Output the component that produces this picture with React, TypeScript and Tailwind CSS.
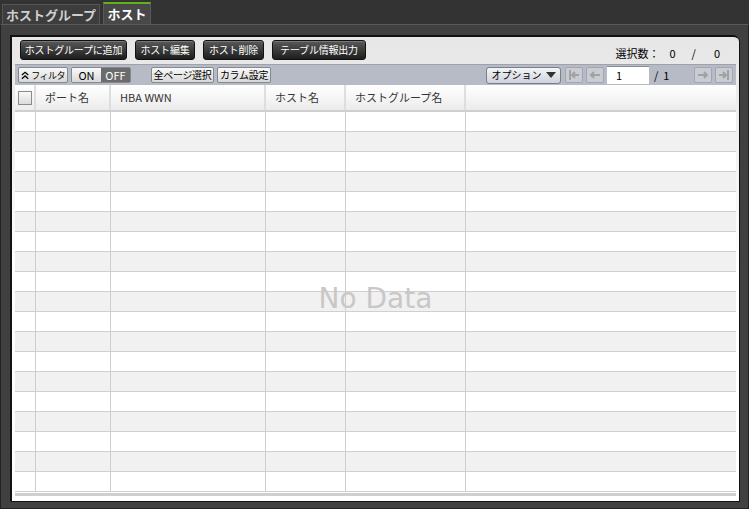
import React from 'react';

const font = { fontFamily: '"Noto Sans CJK JP", "Liberation Sans", sans-serif' };

const DarkButton = ({ label, width }: { label: string; width: string }) => (
  <button
    className={`${width} h-[20px] rounded-[3px] border border-[#111] bg-gradient-to-b from-[#5a5a5a] to-[#1e1e1e] text-[10px] tracking-[-0.2px] whitespace-nowrap leading-none text-white shadow-[inset_0_1px_0_#777] flex items-center justify-center`}
  >
    {label}
  </button>
);

const ToolButton = ({ children, className = '' }: { children: React.ReactNode; className?: string }) => (
  <button
    className={`h-[16px] px-[2px] rounded-[2px] border border-[#85888f] bg-gradient-to-b from-[#fafafa] to-[#d8d8d8] text-[10px] tracking-[-0.3px] whitespace-nowrap leading-none text-black flex items-center justify-center ${className}`}
  >
    {children}
  </button>
);

const PageButton = ({ kind }: { kind: 'first' | 'prev' | 'next' | 'last' }) => (
  <div className="w-[18px] h-[16px] rounded-[2px] border border-[#a3a6ae] bg-[#c9ccd3] flex items-center justify-center">
    <svg width="12" height="10" viewBox="0 0 12 10" fill="none" stroke="#a2a2a2" strokeWidth="2">
      {kind === 'first' && (
        <>
          <path d="M2 0v10" />
          <path d="M11 5H4M7 2L4 5l3 3" />
        </>
      )}
      {kind === 'prev' && <path d="M11 5H2M5 2L2 5l3 3" />}
      {kind === 'next' && <path d="M1 5h9M7 2l3 3-3 3" />}
      {kind === 'last' && (
        <>
          <path d="M10 0v10" />
          <path d="M1 5h7M5 2l3 3-3 3" />
        </>
      )}
    </svg>
  </div>
);

const cols = 'grid grid-cols-[21px_75px_155px_80px_120px_1fr]';

export default function App() {
  const rows = Array.from({ length: 19 }, (_, i) => i);
  const headers = ['', 'ポート名', 'HBA WWN', 'ホスト名', 'ホストグループ名', ''];

  return (
    <div className="w-[749px] h-[509px] bg-[#333333] flex flex-col overflow-hidden" style={font}>
      {/* tabs */}
      <div className="h-[24px] flex items-end pl-[2px] gap-[3px] shrink-0">
        <div className="h-[20px] w-[98px] bg-[#3d3d3d] border border-b-0 border-[#555] flex items-center justify-center text-[13px] font-bold text-[#cfcfcf]">
          ホストグループ
        </div>
        <div className="h-[22px] w-[48px] bg-[#484848] border-t-2 border-t-[#5fb21b] border-x border-x-[#5a5a5a] flex items-center justify-center text-[13px] font-bold text-white">
          ホスト
        </div>
      </div>

      {/* panel */}
      <div className="flex-1 border-t border-[#5a5a5a] border-x border-b border-x-[#222] border-b-[#222] bg-[#404040] pt-[10px] pl-[9px] pr-[9px] pb-[7px] flex">
        <div className="flex-1 flex flex-col rounded-tr-[6px] border-l-2 border-t-2 border-[#111] bg-gradient-to-b from-[#e6e6e6] via-white to-white pb-[5px] px-[3px] shadow-[1px_1px_0_#111]">
          {/* button row */}
          <div className="h-[24px] flex items-center pl-[5px] pr-[16px] pt-[2px]">
            <div className="flex gap-[8px]">
              <DarkButton label="ホストグループに追加" width="w-[107px]" />
              <DarkButton label="ホスト編集" width="w-[60px]" />
              <DarkButton label="ホスト削除" width="w-[61px]" />
              <DarkButton label="テーブル情報出力" width="w-[94px]" />
            </div>
            <div className="ml-auto flex items-center text-[11px] text-black pt-[6px]">
              <span>選択数：</span>
              <span className="ml-[10px]">0</span>
              <span className="ml-[16px]">/</span>
              <span className="ml-[18px]">0</span>
            </div>
          </div>

          {/* toolbar */}
          <div className="mt-[3px] h-[21px] bg-[#b7bbc6] border-t border-[#9ea2ac] flex items-center pl-[3px] pr-[3px]">
            <ToolButton className="w-[50px] gap-[2px]">
              <svg width="9" height="9" viewBox="0 0 9 9" fill="none" stroke="#000" strokeWidth="1.4">
                <path d="M1 4l3.5-3L8 4M1 8l3.5-3L8 8" />
              </svg>
              <span className="text-[9px] tracking-[-0.5px]">フィルタ</span>
            </ToolButton>
            <div className="ml-[3px] h-[16px] w-[60px] flex rounded-[2px] border border-[#85888f] overflow-hidden text-[11px] leading-none">
              <div className="w-[30px] bg-gradient-to-b from-[#fafafa] to-[#d8d8d8] flex items-center justify-center text-black">ON</div>
              <div className="w-[30px] bg-[#6b6b6b] flex items-center justify-center text-white">OFF</div>
            </div>
            <ToolButton className="ml-[20px] w-[63px]">全ページ選択</ToolButton>
            <ToolButton className="ml-[3px] w-[54px]">カラム設定</ToolButton>

            <button className="ml-auto h-[17px] w-[75px] rounded-[3px] border border-[#7b7f89] bg-gradient-to-b from-[#f4f5f8] to-[#cfd2da] flex items-center justify-center gap-[4px] text-[10px] whitespace-nowrap leading-none text-black">
              オプション
              <svg width="10" height="6" viewBox="0 0 10 6">
                <path d="M0 0h10L5 6z" fill="#333" />
              </svg>
            </button>
            <div className="ml-[4px] flex gap-[3px]">
              <PageButton kind="first" />
              <PageButton kind="prev" />
            </div>
            <div className="ml-[3px] h-[18px] w-[42px] bg-white border-t border-[#8a8d95] text-[11px] flex items-center pl-[9px] text-black">1</div>
            <span className="ml-[5px] w-[40px] text-[11px] text-black">/&nbsp; 1</span>
            <div className="flex gap-[3px]">
              <PageButton kind="next" />
              <PageButton kind="last" />
            </div>
          </div>

          {/* table */}
          <div className="relative flex-1 flex flex-col border-b-[3px] border-[#cfcfcf]">
            <div className={`${cols} h-[27px] shrink-0 bg-gradient-to-b from-white to-[#ececec] border-b-2 border-[#cfcfcf]`}>
              {headers.map((h, i) => (
                <div
                  key={i}
                  className={`flex items-center text-[11px] text-[#333] ${i < 5 ? 'border-r-2 border-[#dedede]' : ''} ${i === 0 ? 'justify-center' : 'pl-[9px]'}`}
                >
                  {i === 0 ? (
                    <div className="w-[14px] h-[14px] border border-[#8a8a8a] bg-gradient-to-b from-[#fafafa] to-[#dcdcdc]" />
                  ) : (
                    h
                  )}
                </div>
              ))}
            </div>
            {rows.map((r) => (
              <div key={r} className={`${cols} h-[20px] shrink-0 border-b border-[#d0d0d0] ${r % 2 === 1 ? 'bg-[#f1f1f1]' : 'bg-white'}`}>
                {headers.map((_, i) => (
                  <div key={i} className={i < 5 ? 'border-r border-[#cdcdcd]' : ''} />
                ))}
              </div>
            ))}
            <div className="absolute left-0 right-0 top-[193px] flex justify-center pointer-events-none">
              <span className="text-[28px] text-[#c8c8c8]" style={{ fontFamily: '"DejaVu Sans", sans-serif' }}>
                No Data
              </span>
            </div>
          </div>
        </div>
      </div>
    </div>
  );
}
